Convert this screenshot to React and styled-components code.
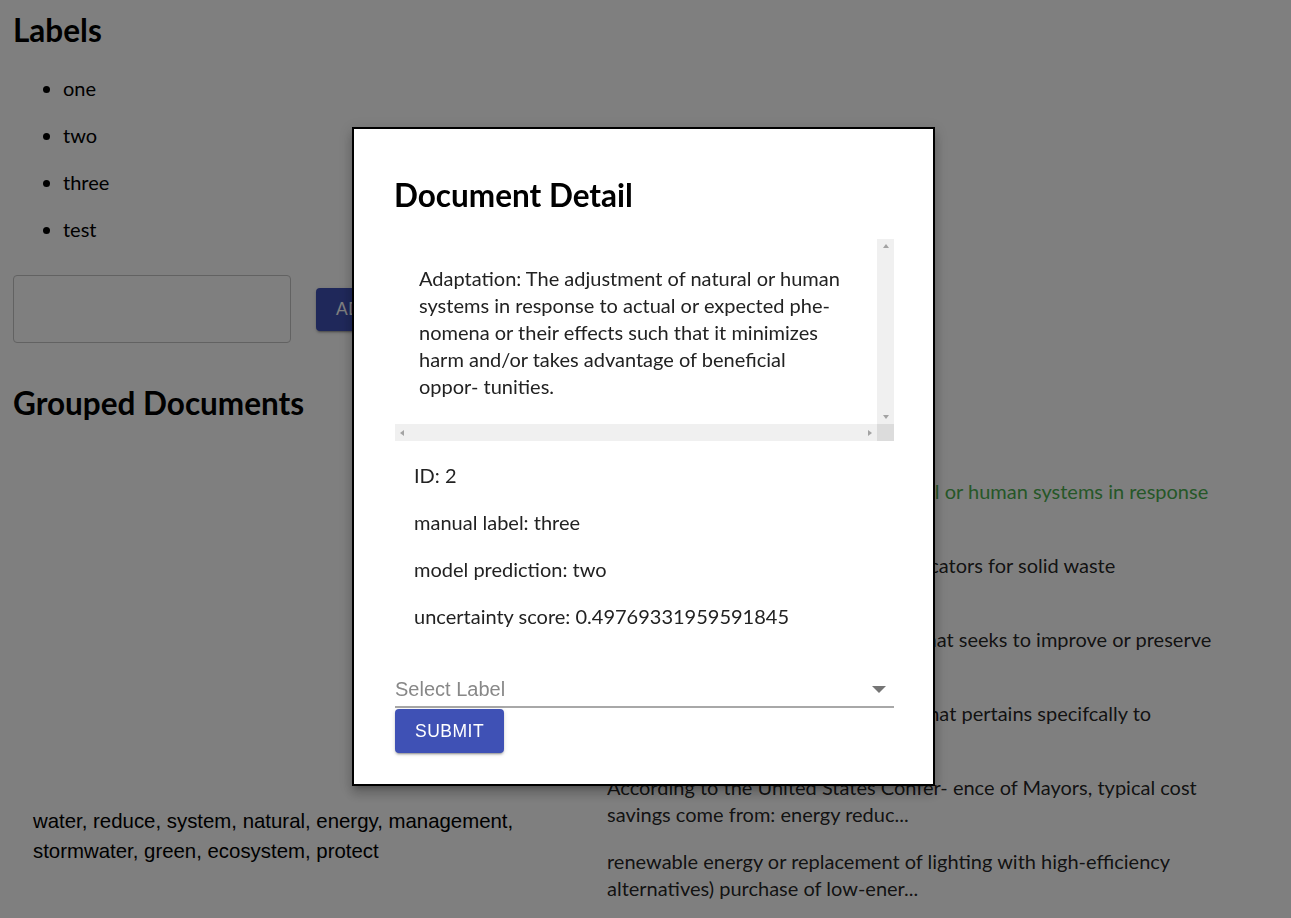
import React from "react";
import styled, { createGlobalStyle, css } from "styled-components";

const GlobalStyle = createGlobalStyle`
  body {
    margin: 0;
    background: #fff;
    font-family: Lato, "Open Sans", sans-serif;
    font-size: 20px;
    color: #000;
  }
`;

const Page = styled.div`
  padding: 10px 13px 40px;
`;

const Heading = styled.h2`
  font-size: 31.5px;
  line-height: 40px;
  font-weight: 700;
  margin: ${({ $top }) => $top || 0}px 0 0;
`;

const LabelList = styled.ul`
  margin: 25px 0 0;
  padding-left: 50px;
`;

const LabelItem = styled.li`
  line-height: 27px;
  margin-bottom: 20px;
`;

const AddRow = styled.div`
  display: flex;
  align-items: center;
  gap: 25px;
  margin-top: 32px;
`;

const Field = styled.div`
  width: 278px;
  height: 68px;
  box-sizing: border-box;
  border: 1px solid #c4c4c4;
  border-radius: 4px;
`;

const Button = styled.button`
  background: #3f51b5;
  color: #fff;
  border: none;
  border-radius: 4px;
  height: ${({ $h }) => $h || 44}px;
  padding: 0 20px;
  font-family: "Liberation Sans", Arial, sans-serif;
  font-size: 17.5px;
  letter-spacing: 0.5px;
  font-weight: 500;
  text-transform: uppercase;
  box-shadow: 0 3px 1px -2px rgba(0, 0, 0, 0.2), 0 2px 2px 0 rgba(0, 0, 0, 0.14),
    0 1px 5px 0 rgba(0, 0, 0, 0.12);
  cursor: pointer;
`;

const GroupGrid = styled.div`
  display: grid;
  grid-template-columns: 574px 1fr;
  margin-top: 55px;
`;

const Keywords = styled.div`
  padding: 328px 20px 0;
  font-family: "Liberation Sans", Arial, sans-serif;
  font-size: 20.4px;
  line-height: 30px;
`;

const DocList = styled.div`
  padding: 0 60px 0 20px;
`;

const Doc = styled.p`
  margin: 0 0 20px;
  line-height: 27px;
  color: ${({ $active }) => ($active ? "#4caf50" : "rgba(0, 0, 0, 0.87)")};
`;

const Overlay = styled.div`
  position: fixed;
  inset: 0;
  background: rgba(0, 0, 0, 0.5);
  display: flex;
  align-items: flex-start;
  padding: 127px 0 0 352px;
`;

const Modal = styled.div`
  background: #fff;
  border: 2px solid #000;
  padding: 46px 39px 31px 40px;
  width: 500px;
  box-shadow: 0 5px 5px -3px rgba(0, 0, 0, 0.2), 0 8px 10px 1px rgba(0, 0, 0, 0.14),
    0 3px 14px 2px rgba(0, 0, 0, 0.12);
`;

const ModalTitle = styled.h2`
  font-size: 31.5px;
  line-height: 40px;
  font-weight: 700;
  margin: 0 0 24px;
`;

const ScrollFrame = styled.div`
  display: grid;
  grid-template-columns: 1fr 17px;
  grid-template-rows: 185px 17px;
  margin-left: 1px;
`;

const ScrollContent = styled.div`
  overflow: hidden;
  padding: 6px 30px 0 24px;
`;

const Track = styled.div`
  background: #f0f0f0;
  display: flex;
  flex-direction: ${({ $vertical }) => ($vertical ? "column" : "row")};
  justify-content: space-between;
  align-items: center;
  padding: ${({ $vertical }) => ($vertical ? "5px 0" : "0 5px")};
`;

const Corner = styled.div`
  background: #dcdcdc;
`;

const arrowShapes = {
  up: css`
    border-left: 3px solid transparent;
    border-right: 3px solid transparent;
    border-bottom: 4px solid #a3a3a3;
  `,
  down: css`
    border-left: 3px solid transparent;
    border-right: 3px solid transparent;
    border-top: 4px solid #a3a3a3;
  `,
  left: css`
    border-top: 3px solid transparent;
    border-bottom: 3px solid transparent;
    border-right: 4px solid #a3a3a3;
  `,
  right: css`
    border-top: 3px solid transparent;
    border-bottom: 3px solid transparent;
    border-left: 4px solid #a3a3a3;
  `,
};

const Arrow = styled.span`
  width: 0;
  height: 0;
  ${({ $dir }) => arrowShapes[$dir]}
`;

const BoxText = styled.p`
  margin: 20px 0;
  line-height: 27px;
  color: #222;
`;

const Info = styled.div`
  padding: 21px 0 0 20px;
`;

const InfoLine = styled.p`
  margin: 0 0 20px;
  line-height: 27px;
  color: #222;
`;

const SelectBox = styled.div`
  margin: 45px 0 0 1px;
  height: 33px;
  box-sizing: border-box;
  border-bottom: 2px solid #a8a8a8;
  display: flex;
  align-items: center;
  justify-content: space-between;
  font-family: "Liberation Sans", Arial, sans-serif;
  font-size: 20px;
  color: #888;
  padding-bottom: 2px;
`;

const Caret = styled.span`
  width: 0;
  height: 0;
  border-left: 7px solid transparent;
  border-right: 7px solid transparent;
  border-top: 7px solid #757575;
  margin-right: 8px;
`;

const SubmitRow = styled.div`
  margin: 1px 0 0 1px;
`;

const labels = ["one", "two", "three", "test"];

const docs = [
  {
    text: "Adaptation: The adjustment of natural or human systems in response to actual or expected phe- nomena...",
    active: true,
  },
  { text: "Benchmarking: Key performance indicators for solid waste management and waste reduction ..." },
  { text: "Stewardship: Any land-use practice that seeks to improve or preserve the natural environment..." },
  { text: "Green infrastructure: A design term that pertains specifcally to stormwater management..." },
  {
    text: "According to the United States Confer- ence of Mayors, typical cost savings come from: energy reduc...",
  },
  {
    text: "renewable energy or replacement of lighting with high-efficiency alternatives) purchase of low-ener...",
  },
];

const info = [
  "ID: 2",
  "manual label: three",
  "model prediction: two",
  "uncertainty score: 0.49769331959591845",
];

export default function App() {
  return (
    <>
      <GlobalStyle />
      <Page>
        <Heading>Labels</Heading>
        <LabelList>
          {labels.map((l) => (
            <LabelItem key={l}>{l}</LabelItem>
          ))}
        </LabelList>
        <AddRow>
          <Field />
          <Button $h={43}>Add Label</Button>
        </AddRow>
        <Heading $top={40}>Grouped Documents</Heading>
        <GroupGrid>
          <Keywords>
            water, reduce, system, natural, energy, management, stormwater, green, ecosystem, protect
          </Keywords>
          <DocList>
            {docs.map((d, i) => (
              <Doc key={i} $active={d.active}>
                {d.text}
              </Doc>
            ))}
          </DocList>
        </GroupGrid>
      </Page>
      <Overlay>
        <Modal>
          <ModalTitle>Document Detail</ModalTitle>
          <ScrollFrame>
            <ScrollContent>
              <BoxText>
                Adaptation: The adjustment of natural or human systems in response to actual or
                expected phe- nomena or their effects such that it minimizes harm and/or takes
                advantage of beneficial oppor- tunities.
              </BoxText>
            </ScrollContent>
            <Track $vertical>
              <Arrow $dir="up" />
              <Arrow $dir="down" />
            </Track>
            <Track>
              <Arrow $dir="left" />
              <Arrow $dir="right" />
            </Track>
            <Corner />
          </ScrollFrame>
          <Info>
            {info.map((t) => (
              <InfoLine key={t}>{t}</InfoLine>
            ))}
          </Info>
          <SelectBox>
            <span>Select Label</span>
            <Caret />
          </SelectBox>
          <SubmitRow>
            <Button>Submit</Button>
          </SubmitRow>
        </Modal>
      </Overlay>
    </>
  );
}
